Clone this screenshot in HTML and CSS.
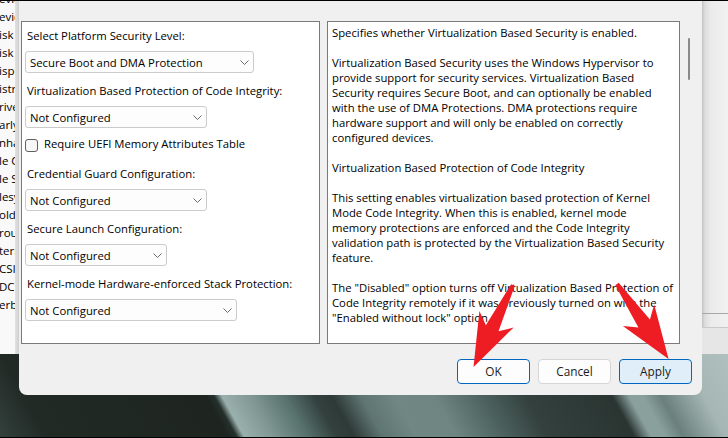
FILE: index.html
```html
<!DOCTYPE html>
<html>
<head>
<meta charset="utf-8">
<title>Device Guard</title>
<link rel="stylesheet" href="styles.css">
</head>
<body>
<div class="screen">
  <div class="desk">
    <div class="bgwin-left">
      <div class="bg-list">
        <div class="bg-item bg-first">evice</div>
        <div class="bg-item">evice</div>
        <div class="bg-item">isk N</div>
        <div class="bg-item">isk Q</div>
        <div class="bg-item">isplay</div>
        <div class="bg-item">istrib</div>
        <div class="bg-item">river</div>
        <div class="bg-item">arly L</div>
        <div class="bg-item">nhanc</div>
        <div class="bg-item">le Cla</div>
        <div class="bg-item">le Sh</div>
        <div class="bg-item">lesys</div>
        <div class="bg-item">older</div>
        <div class="bg-item">roup</div>
        <div class="bg-item">tern</div>
        <div class="bg-item">CSI</div>
        <div class="bg-item">DC</div>
        <div class="bg-item">erbe</div>
      </div>
      <div class="bg-shadow"></div>
    </div>

    <div class="dialog">
      <div class="panels">
        <div class="options">
          <div class="label">Select Platform Security Level:</div>
          <div class="select sel-wide"><span>Secure Boot and DMA Protection</span><svg class="chev" width="9" height="5" viewBox="0 0 9 5"><path d="M0.5 0.5 L4.5 4.5 L8.5 0.5" fill="none" stroke="#6b6b6b" stroke-width="1"/></svg></div>
          <div class="label">Virtualization Based Protection of Code Integrity:</div>
          <div class="select sel-mid"><span>Not Configured</span><svg class="chev" width="9" height="5" viewBox="0 0 9 5"><path d="M0.5 0.5 L4.5 4.5 L8.5 0.5" fill="none" stroke="#6b6b6b" stroke-width="1"/></svg></div>
          <label class="check-row"><span class="checkbox"></span><span class="check-text">Require UEFI Memory Attributes Table</span></label>
          <div class="label label-after-check">Credential Guard Configuration:</div>
          <div class="select sel-mid"><span>Not Configured</span><svg class="chev" width="9" height="5" viewBox="0 0 9 5"><path d="M0.5 0.5 L4.5 4.5 L8.5 0.5" fill="none" stroke="#6b6b6b" stroke-width="1"/></svg></div>
          <div class="label">Secure Launch Configuration:</div>
          <div class="select sel-small"><span>Not Configured</span><svg class="chev" width="9" height="5" viewBox="0 0 9 5"><path d="M0.5 0.5 L4.5 4.5 L8.5 0.5" fill="none" stroke="#6b6b6b" stroke-width="1"/></svg></div>
          <div class="label">Kernel-mode Hardware-enforced Stack Protection:</div>
          <div class="select sel-large"><span>Not Configured</span><svg class="chev" width="9" height="5" viewBox="0 0 9 5"><path d="M0.5 0.5 L4.5 4.5 L8.5 0.5" fill="none" stroke="#6b6b6b" stroke-width="1"/></svg></div>
        </div>

        <div class="help">
          <p>Specifies whether Virtualization Based Security is enabled.</p>
          <p>Virtualization Based Security uses the Windows Hypervisor to<br>provide support for security services. Virtualization Based<br>Security requires Secure Boot, and can optionally be enabled<br>with the use of DMA Protections. DMA protections require<br>hardware support and will only be enabled on correctly<br>configured devices.</p>
          <p>Virtualization Based Protection of Code Integrity</p>
          <p>This setting enables virtualization based protection of Kernel<br>Mode Code Integrity. When this is enabled, kernel mode<br>memory protections are enforced and the Code Integrity<br>validation path is protected by the Virtualization Based Security<br>feature.</p>
          <p>The "Disabled" option turns off Virtualization Based Protection of<br>Code Integrity remotely if it was previously turned on with the<br>"Enabled without lock" option.</p>
          <p>The "Enabled with UEFI lock" option ensures that Virtualization</p>
        </div>

        <div class="vscroll"></div>
      </div>

      <div class="buttons">
        <button class="btn btn-ok">OK</button>
        <button class="btn btn-cancel">Cancel</button>
        <button class="btn btn-apply">Apply</button>
      </div>
    </div>

    <div class="bgwin-right">
      <div class="rw-top"></div>
      <div class="rw-line"></div>
      <div class="rw-mid"></div>
      <div class="rw-line rw-line-light"></div>
      <div class="rw-bottom"></div>
    </div>
  </div>

  <svg class="arrows" width="728" height="438" viewBox="0 0 728 438">
    <polygon transform="translate(513 285) rotate(25.7)" points="-2,0 2,0 7,48 19,38 0,91 -19,38 -7,48" fill="#ee1d24"/>
    <polygon transform="translate(617 284) rotate(-34.5)" points="-2,0 2,0 7,48 19,38 0,91 -19,38 -7,48" fill="#ee1d24"/>
  </svg>
</div>
</body>
</html>
```

FILE: styles.css
```css
html, body {
  margin: 0;
  padding: 0;
}

body {
  font-family: "Open Sans", "Noto Sans", sans-serif;
  font-size: 11.3px;
  color: #000;
}

.screen {
  position: relative;
  width: 728px;
  height: 438px;
  overflow: hidden;
  box-sizing: border-box;
  border-top: 1px solid #000;
  border-bottom: 1px solid #000;
  background:
    linear-gradient(61deg,
      #33413d 0px, #222a26 40px, #1e2521 200px, #24302c 207px,
      #9ab0ad 214px, #7f9693 240px, #56706c 270px, #33403d 295px,
      #2e3a37 310px, #5f7572 335px, #718784 365px, #6e8582 400px,
      #4d6360 440px, #33403d 480px, #2a3532 555px, #8aa09d 570px,
      #8aa09d 582px, #6a807d 598px, #a5b6b4 635px, #b1c1bf 680px);
}

.desk {
  display: flex;
  align-items: flex-start;
}

/* background window, left */
.bgwin-left {
  width: 19px;
  height: 353px;
  display: flex;
  flex-shrink: 0;
}

.bg-list {
  width: 15px;
  height: 100%;
  background: #f9f9f9;
  overflow: hidden;
  font-size: 11.5px;
  line-height: 18px;
}

.bg-item {
  white-space: nowrap;
  margin-left: -1px;
}

.bg-first {
  margin-top: -11px;
}

.bg-shadow {
  width: 4px;
  height: 100%;
  background: linear-gradient(90deg, #e2e2e2, #cfcfcf);
}

/* dialog */
.dialog {
  width: 683px;
  height: 394px;
  flex-shrink: 0;
  box-sizing: border-box;
  background: #f0f0f0;
  border-radius: 0 0 8px 8px;
  padding: 20px 0 0 2px;
}

.panels {
  display: flex;
  align-items: flex-start;
}

.options {
  width: 299px;
  height: 323px;
  box-sizing: border-box;
  border: 1px solid #7a7a7a;
  background: #fff;
  padding: 6px 0 0 3px;
}

.label {
  height: 15px;
  line-height: 15px;
  margin-left: 2px;
  margin-top: 10px;
  white-space: nowrap;
}

.label:first-child {
  margin-top: 0;
}

.label-after-check {
  margin-top: 14px;
}

.select {
  position: relative;
  height: 22px;
  box-sizing: border-box;
  margin-top: 8px;
  border: 1px solid #cbcbcb;
  border-radius: 3px;
  background: #fdfdfd;
  display: flex;
  align-items: center;
  justify-content: space-between;
  padding: 0 4px 0 4px;
  white-space: nowrap;
}

.chev {
  display: block;
  flex-shrink: 0;
  margin-top: 1px;
}

.sel-wide { width: 229px; }
.sel-mid { width: 182px; }
.sel-small { width: 142px; }
.sel-large { width: 212px; }

.check-row {
  display: flex;
  align-items: center;
  height: 14px;
  margin-top: 10px;
}

.checkbox {
  width: 13px;
  height: 13px;
  box-sizing: border-box;
  border: 1px solid #5f5f5f;
  border-radius: 3px;
  background: #f7f7f7;
  flex-shrink: 0;
}

.check-text {
  margin-left: 6px;
  white-space: nowrap;
  line-height: 14px;
  margin-top: -2px;
}

.help {
  width: 353px;
  height: 323px;
  box-sizing: border-box;
  margin-left: 7px;
  border: 1px solid #7a7a7a;
  background: #fff;
  padding: 3px 0 0 4px;
  overflow: hidden;
  line-height: 15px;
  white-space: nowrap;
}

.help p {
  margin: 0 0 15px 0;
}

.vscroll {
  width: 2px;
  height: 42px;
  margin: 17px 0 0 8px;
  background: #8a8a8a;
  border-radius: 1px;
}

.buttons {
  display: flex;
  justify-content: flex-end;
  gap: 8px;
  margin-top: 15px;
  padding-right: 10px;
}

.btn {
  width: 73px;
  height: 25px;
  box-sizing: border-box;
  border-radius: 4px;
  font-family: "Open Sans", "Noto Sans", sans-serif;
  font-size: 11.8px;
  color: #1b1b1b;
  background: #fdfdfd;
  padding: 0 0 1px 0;
}

.btn-ok {
  border: 1px solid #0067c0;
}

.btn-cancel {
  border: 1px solid #d5d5d5;
}

.btn-apply {
  border: 1px solid #0067c0;
  background: #e0eef9;
}

/* background window, right */
.bgwin-right {
  width: 26px;
  height: 353px;
  flex-shrink: 0;
  display: flex;
  flex-direction: column;
  background: linear-gradient(90deg, #c2c2c2 0px, #dedede 3px, #ebebeb 9px, #f1f1f1 26px);
}

.rw-top {
  height: 312px;
}

.rw-line {
  height: 1px;
  background: #a8a8a8;
}

.rw-line-light {
  background: #c9c9c9;
}

.rw-mid {
  height: 13px;
}

.rw-bottom {
  flex: 1;
  background: #e6e6e6;
}

.arrows {
  position: absolute;
  left: 0;
  top: -1px;
  pointer-events: none;
}
```
